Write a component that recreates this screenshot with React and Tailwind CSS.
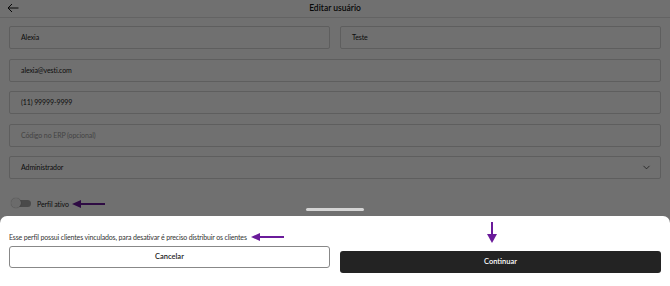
import { ChevronDown } from 'lucide-react';

const font = { fontFamily: 'Lato, "Noto Sans", sans-serif' };

function Field({ children, placeholder }) {
  return (
    <div className={`h-[23px] flex items-center px-[11px] border border-[#d6d6d6] rounded-[2px] text-[7px] tracking-[-0.1px] ${placeholder ? 'text-[#9a9a9a]' : 'text-[#222]'}`}>
      {children}
    </div>
  );
}

function ArrowLeft({ className }) {
  return (
    <svg className={className} width="34" height="8" viewBox="0 0 34 8">
      <path d="M8 4 H33" stroke="#6a1b9a" strokeWidth="2" />
      <path d="M0 4 L9 0 L9 8 Z" fill="#6a1b9a" />
    </svg>
  );
}

export default function App() {
  return (
    <div className="relative w-[670px] h-[286px] overflow-hidden bg-white" style={font}>
      {/* page */}
      <div className="h-[18px] border-b border-[#e2e2e2] flex items-center relative">
        <svg className="absolute left-[7px] top-[3px]" width="12" height="10" viewBox="0 0 12 10" fill="none" stroke="#111" strokeWidth="1">
          <path d="M11.5 5 H1 M5 1 L1 5 L5 9" />
        </svg>
        <div className="flex-1 text-center text-[8.5px] font-semibold text-[#111]">Editar usuário</div>
      </div>
      <div className="px-[9px] pt-[8px] flex flex-col gap-[9.5px]">
        <div className="grid grid-cols-2 gap-[10px]">
          <Field>Alexia</Field>
          <Field>Teste</Field>
        </div>
        <Field>alexia@vesti.com</Field>
        <Field>(11) 99999-9999</Field>
        <Field placeholder>Código no ERP (opcional)</Field>
        <div className="h-[23px] flex items-center justify-between pl-[11px] pr-[8px] border border-[#d6d6d6] rounded-[2px] text-[7px] tracking-[-0.1px] text-[#222]">
          <span>Administrador</span>
          <ChevronDown size={11} strokeWidth={1.5} color="#222" />
        </div>
        <div className="flex items-center gap-[6px] mt-[10px] pl-[2px]">
          <div className="relative w-[20px] h-[9px]">
            <div className="absolute left-[4px] top-[1px] w-[16px] h-[7px] rounded-full bg-[#a8a8a8]" />
            <div className="absolute left-0 top-[-1px] w-[10px] h-[10px] rounded-full bg-[#f3f3f3] shadow-[0_0_1px_rgba(0,0,0,0.5)]" />
          </div>
          <span className="text-[7px] tracking-[-0.1px] text-[#222]">Perfil ativo</span>
          <ArrowLeft className="-ml-[3px]" />
        </div>
      </div>

      {/* overlay */}
      <div className="absolute inset-0 bg-black/[0.56]" />
      <div className="absolute left-[306px] top-[208px] w-[58px] h-[3px] rounded-full bg-[#d4d4d4]" />

      {/* bottom sheet */}
      <div className="absolute left-0 right-0 bottom-0 h-[70px] bg-white rounded-t-[7px] px-[9px] pt-[15px]">
        <div className="flex items-center h-[12px]">
          <span className="text-[7px] tracking-[-0.15px] text-[#333]">Esse perfil possui clientes vinculados, para desativar é preciso distribuir os clientes</span>
          <ArrowLeft className="ml-[4px]" />
        </div>
        <div className="grid grid-cols-2 gap-[10px] mt-[3px]">
          <button className="h-[22px] rounded-[3px] border border-[#888] text-[7.5px] font-semibold text-[#222]">Cancelar</button>
          <div className="relative">
            <svg className="absolute left-[147px] -top-[24px]" width="10" height="21" viewBox="0 0 10 21">
              <path d="M5 0 V13" stroke="#6a1b9a" strokeWidth="2" />
              <path d="M0 12 L10 12 L5 21 Z" fill="#6a1b9a" />
            </svg>
            <button className="w-full h-[22px] rounded-[3px] bg-[#232323] text-[7.5px] font-semibold text-white">Continuar</button>
          </div>
        </div>
      </div>
    </div>
  );
}
